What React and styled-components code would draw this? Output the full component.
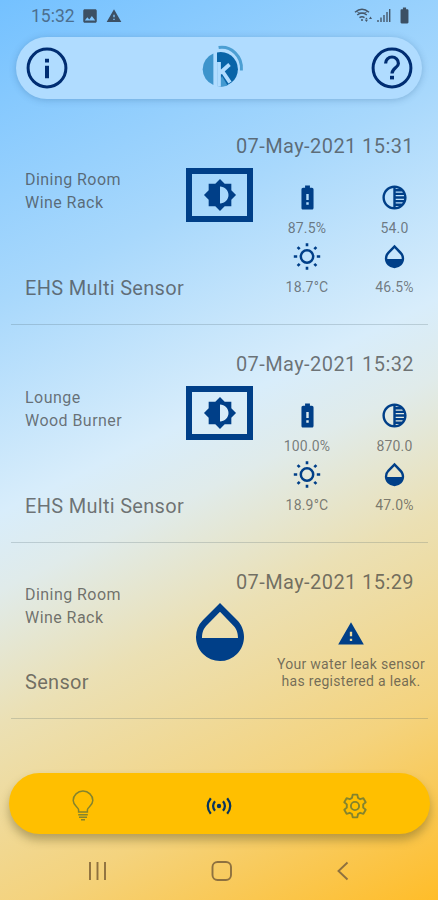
import React from "react"
import styled, { createGlobalStyle } from "styled-components"
import {
  MdBatteryAlert,
  MdBatteryFull,
  MdBrightness6,
  MdImage,
  MdOpacity,
  MdTonality,
  MdWarning,
} from "react-icons/md"

const sensors = [
  {
    room: "Dining Room",
    place: "Wine Rack",
    type: "EHS Multi Sensor",
    date: "07-May-2021 15:31",
    battery: "87.5%",
    light: "54.0",
    temperature: "18.7°C",
    humidity: "46.5%",
  },
  {
    room: "Lounge",
    place: "Wood Burner",
    type: "EHS Multi Sensor",
    date: "07-May-2021 15:32",
    battery: "100.0%",
    light: "870.0",
    temperature: "18.9°C",
    humidity: "47.0%",
  },
  {
    room: "Dining Room",
    place: "Wine Rack",
    type: "Sensor",
    date: "07-May-2021 15:29",
    leak: ["Your water leak sensor", "has registered a leak."],
  },
]

const InfoIcon = () => (
  <svg width="42" height="42" viewBox="0 0 42 42" fill="none" stroke="currentColor">
    <circle cx="21" cy="21" r="18.9" strokeWidth="3" />
    <path strokeWidth="4" d="M21 11.8v3.6M21 18.8v12.4" />
  </svg>
)

const HelpIcon = () => (
  <svg width="42" height="42" viewBox="0 0 42 42" fill="none" stroke="currentColor">
    <circle cx="21" cy="21" r="18.9" strokeWidth="3" />
    <path strokeWidth="3.2" d="M14.6 16.4a6.4 6.4 0 1 1 12.8 0c0 4.2-6.4 4.8-6.4 10.2" />
    <path strokeWidth="4" d="M21 28.8v3.6" />
  </svg>
)

const SunIcon = () => (
  <svg width="28" height="28" viewBox="0 0 28 28" fill="none" stroke="currentColor">
    <circle cx="14" cy="14" r="6.2" strokeWidth="2.5" />
    <path
      strokeWidth="2.6"
      d="M14 .8v3M14 24.2v3M.8 14h3.4M23.8 14h3.4M4.6 4.6l2.1 2.1M21.3 21.3l2.1 2.1M4.6 23.4l2.1-2.1M21.3 6.7l2.1-2.1"
    />
  </svg>
)

const Logo = () => (
  <svg width="44" height="44" viewBox="0 0 44 44">
    <path d="M12.4 9.4A17 17 0 0 0 12.4 41Z" fill="#3d94cc" />
    <path d="M16 8.4A17.2 17.2 0 1 1 16 42Z" fill="#0864a8" />
    <path d="M20 34v8.4a17 17 0 0 0 6.5-.8L21 32Z" fill="#4299d0" />
    <path d="M18 18v24.4M28.5 20.5L19 29M21.6 27.5L29 38.5" stroke="#b0dcff" strokeWidth="3.8" fill="none" />
    <path d="M17.6 3.6C30 1.6 41.6 12 40.4 26.5" stroke="#4c9fd3" strokeWidth="3" fill="none" />
  </svg>
)

const WifiIcon = () => (
  <svg width="19" height="16" viewBox="0 0 19 16" fill="none" stroke="#45576a">
    <path strokeWidth="1.5" d="M1 4.2Q8 -1.8 15 4.2M3.2 7Q8 3 12.8 7M5.5 9.6Q8 7.7 10.5 9.6M8 11v2" />
    <path d="M3 3.7Q8 7 13 3.7" strokeWidth=".8" />
    <path d="M11 11.5l1.4-2 1.4 2ZM11 12l1.4 2 1.4-2ZM15 11l1.5-2.5L18 11Z" fill="#45576a" stroke="none" />
  </svg>
)

const SignalIcon = () => (
  <svg width="14" height="15" viewBox="0 0 14 15" stroke="#45576a" strokeWidth="1.4">
    <path d="M1 12v2M4 9.5V14M7 7v7M10 4v10M12.7 1v13" />
  </svg>
)

const BulbIcon = () => (
  <svg width="22" height="32" viewBox="0 0 22 32" fill="none" stroke="currentColor" strokeWidth="1.5">
    <path d="M6.6 22v-2.2C6.4 17 1.2 15.7 1.2 10.5a9.8 9.4 0 0 1 19.6 0c0 5.2-5.2 6.5-5.4 9.3V22Z" />
    <path d="M6.2 24.7h9.6M7 27.3h8M9 29.8h4" />
  </svg>
)

const RadioIcon = () => (
  <svg width="26" height="18" viewBox="0 0 26 18" fill="none" stroke="currentColor" strokeWidth="2.2">
    <circle cx="13" cy="9" r="2.2" fill="currentColor" stroke="none" />
    <path d="M4.8 1.3Q-1.3 9 4.8 16.7M9 4.3Q5.2 9 9 13.7M17 4.3Q20.8 9 17 13.7M21.2 1.3Q27.3 9 21.2 16.7" />
  </svg>
)

const GearIcon = () => (
  <svg width="26" height="26" viewBox="0 0 26 26" fill="none" stroke="currentColor" strokeWidth="1.9" strokeLinejoin="round">
    <circle cx="13" cy="13" r="4.1" />
    <path d="M10.7 1.6h4.6l.7 3.3 2.2 1.3 3.2-1 2.3 4-2.5 2.2v3.2l2.5 2.2-2.3 4-3.2-1-2.2 1.3-.7 3.3h-4.6l-.7-3.3-2.2-1.3-3.2 1-2.3-4 2.5-2.2v-3.2L2.3 9.2l2.3-4 3.2 1L10 4.9Z" />
  </svg>
)

const Sensor = ({ sensor }) => (
  <SensorRow $short={!!sensor.leak}>
    <Details $short={!!sensor.leak}>
      <Location>
        {sensor.room}
        <br />
        {sensor.place}
      </Location>
      <SensorType>{sensor.type}</SensorType>
    </Details>
    <Emblem $short={!!sensor.leak}>
      {sensor.leak ? (
        <MdOpacity size={72} />
      ) : (
        <EmblemFrame>
          <MdBrightness6 size={34} />
        </EmblemFrame>
      )}
    </Emblem>
    <Status>
      <Timestamp>{sensor.date}</Timestamp>
      {sensor.leak ? (
        <Warning>
          <MdWarning size={28} />
          {sensor.leak.map((line) => (
            <WarningLine key={line}>{line}</WarningLine>
          ))}
        </Warning>
      ) : (
        <Readings>
          <Reading>
            <MdBatteryAlert size={29} />
            <Value>{sensor.battery}</Value>
          </Reading>
          <Reading>
            <MdTonality size={29} />
            <Value>{sensor.light}</Value>
          </Reading>
          <Reading>
            <SunIcon />
            <Value>{sensor.temperature}</Value>
          </Reading>
          <Reading>
            <MdOpacity size={29} />
            <Value>{sensor.humidity}</Value>
          </Reading>
        </Readings>
      )}
    </Status>
  </SensorRow>
)

const App = () => {
  return (
    <Screen>
      <GlobalStyle />
      <StatusBar>
        <StatusGroup>
          <Clock>15:32</Clock>
          <MdImage size={18} />
          <MdWarning size={16} />
        </StatusGroup>
        <StatusGroup $tight>
          <WifiIcon />
          <SignalIcon />
          <MdBatteryFull size={19} />
        </StatusGroup>
      </StatusBar>
      <Header>
        <InfoIcon />
        <Logo />
        <HelpIcon />
      </Header>
      <SensorList>
        {sensors.map((sensor, idx) => (
          <Sensor sensor={sensor} key={idx} />
        ))}
      </SensorList>
      <TabBar>
        <Tab>
          <BulbIcon />
        </Tab>
        <Tab $active>
          <RadioIcon />
        </Tab>
        <Tab>
          <GearIcon />
        </Tab>
      </TabBar>
      <SystemNav>
        <svg width="20" height="20" viewBox="0 0 20 20">
          <path d="M2 1v18M9.5 1v18M17 1v18" />
        </svg>
        <svg width="22" height="20" viewBox="0 0 22 20">
          <rect x="1.5" y="1" width="18.5" height="18" rx="5" />
        </svg>
        <svg width="16" height="20" viewBox="0 0 16 20">
          <path d="M12.5 1.5L3.5 10l9 8.5" />
        </svg>
      </SystemNav>
    </Screen>
  )
}

export default App

const GlobalStyle = createGlobalStyle`
  body {
    margin: 0;
    font-family: Roboto, "Liberation Sans", sans-serif;
  }

  * {
    box-sizing: border-box;
  }

  svg {
    display: block;
    flex-shrink: 0;
  }
`

const Screen = styled.div`
  display: flex;
  flex-direction: column;
  width: 438px;
  height: 900px;
  overflow: hidden;
  color: #003f88;
  background: linear-gradient(
    154deg,
    #74c1ff 0%,
    #a8d8fc 27%,
    #d8edfb 46%,
    #e0ebea 53%,
    #ebe0b4 65%,
    #f4d37e 82%,
    #ffbd29 100%
  );
`

const StatusBar = styled.div`
  display: flex;
  justify-content: space-between;
  align-items: center;
  height: 37px;
  padding: 0 24px 6px 31px;
  color: #3c5064;
`

const StatusGroup = styled.div`
  display: flex;
  align-items: center;
  gap: ${({ $tight }) => ($tight ? "4px" : "6.5px")};
`

const Clock = styled.span`
  font-size: 17.5px;
  color: #4c6f8f;
`

const Header = styled.header`
  display: flex;
  align-items: center;
  justify-content: space-between;
  height: 62px;
  margin: 0 16px;
  padding: 0 9px 0 10px;
  border-radius: 31px;
  color: #002d72;
  background: #b0dcff;
  box-shadow: 0 1px 7px rgba(40, 90, 140, 0.3);

  svg:nth-child(2) {
    margin: 0 0 5px 7px;
  }
`

const SensorList = styled.main`
  margin: 8px 10px 0 11px;
`

const SensorRow = styled.section`
  display: grid;
  grid-template-columns: 160px 97px minmax(0, 1fr);
  height: ${({ $short }) => ($short ? "176px" : "218px")};
  border-bottom: 1px solid rgba(70, 90, 100, 0.22);
`

const Details = styled.div`
  display: flex;
  flex-direction: column;
  justify-content: space-between;
  padding: ${({ $short }) => ($short ? "40px" : "61px")} 0 23px 14px;
  white-space: nowrap;
  color: rgba(60, 60, 60, 0.7);
`

const Location = styled.div`
  font-size: 16px;
  line-height: 23px;
  letter-spacing: 0.45px;
`

const SensorType = styled.div`
  font-size: 20px;
  line-height: 26px;
  letter-spacing: 0.3px;
`

const Emblem = styled.div`
  display: flex;
  justify-content: center;
  align-items: flex-start;
  padding-top: ${({ $short }) => ($short ? "53px" : "61px")};
`

const EmblemFrame = styled.div`
  display: flex;
  justify-content: center;
  align-items: center;
  width: 67px;
  height: 54px;
  border: 6px solid #003f88;
`

const Status = styled.div`
  display: flex;
  flex-direction: column;
  padding-top: 26px;
`

const Timestamp = styled.div`
  align-self: flex-end;
  padding-right: 14px;
  font-size: 20px;
  line-height: 26px;
  letter-spacing: 0.42px;
  white-space: nowrap;
  color: rgba(60, 60, 60, 0.7);
`

const Readings = styled.div`
  display: grid;
  grid-template-columns: 78px 97px;
  grid-auto-rows: 59px;
  margin-top: 24px;
`

const Reading = styled.div`
  display: flex;
  flex-direction: column;
  align-items: center;
  justify-content: flex-start;
  height: 59px;

  svg {
    height: 29px;
  }
`

const Value = styled.span`
  padding-top: 7px;
  font-size: 14px;
  line-height: 18px;
  letter-spacing: 0.2px;
  color: rgba(60, 60, 60, 0.65);
`

const Warning = styled.div`
  display: flex;
  flex-direction: column;
  align-items: center;
  padding: 25px 0 0 6px;

  svg {
    margin-bottom: 8px;
  }
`

const WarningLine = styled.div`
  font-size: 14px;
  line-height: 17px;
  letter-spacing: 0.3px;
  white-space: nowrap;
  color: rgba(60, 60, 60, 0.7);
`

const TabBar = styled.nav`
  display: grid;
  grid-template-columns: repeat(3, 1fr);
  height: 61px;
  margin: 54px 8px 0 9px;
  padding: 0 7px 0 6px;
  border-radius: 31px;
  background: #ffbf00;
  box-shadow: 0 6px 10px rgba(90, 80, 30, 0.4);
`

const Tab = styled.div`
  display: flex;
  align-items: center;
  justify-content: center;
  padding-top: 5px;
  color: ${({ $active }) => ($active ? "#06345f" : "#84842d")};
`

const SystemNav = styled.div`
  display: flex;
  justify-content: space-between;
  align-items: center;
  padding: 27px 87px 0 88px;

  svg {
    fill: none;
    stroke: #8e713f;
    stroke-width: 1.9;
  }
`
